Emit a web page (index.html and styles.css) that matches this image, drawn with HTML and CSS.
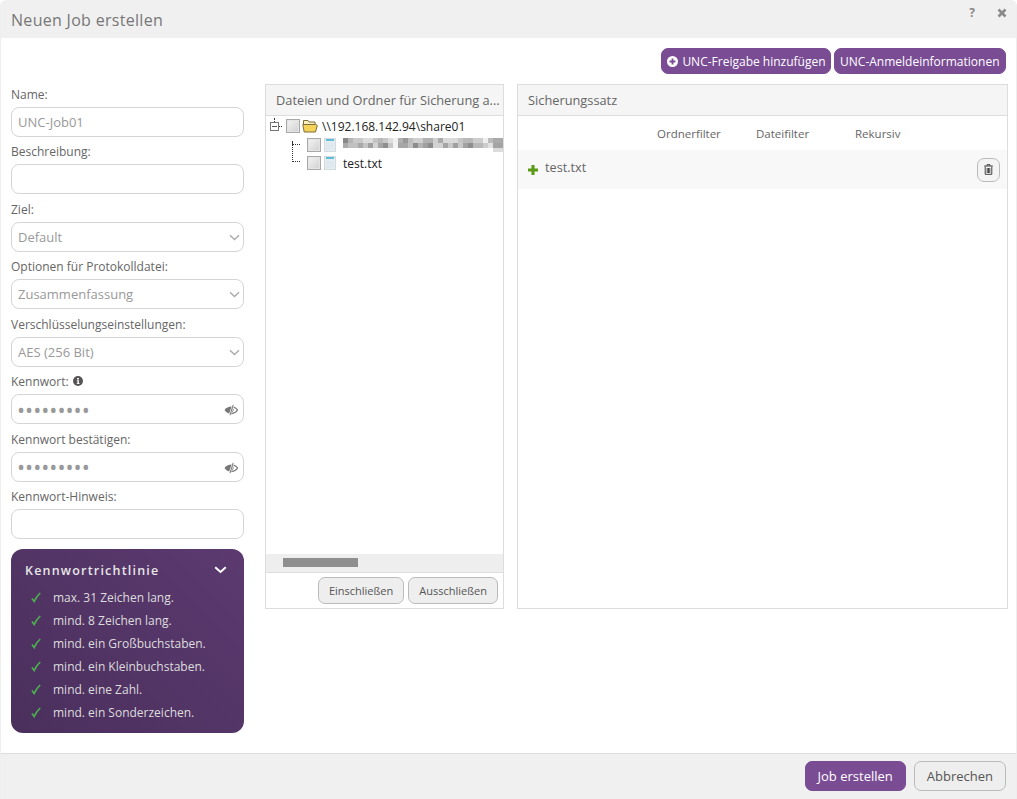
FILE: index.html
```html
<!DOCTYPE html>
<html lang="de">
<head>
<meta charset="UTF-8">
<meta name="viewport" content="width=device-width, initial-scale=1.0">
<title>Neuen Job erstellen</title>
<link rel="stylesheet" href="styles.css">
</head>
<body>
<div class="dialog">
    <div class="title-bar">
        <h1>Neuen Job erstellen</h1>
        <div class="title-icons">
            <span class="help-icon">?</span>
            <svg class="close-icon" width="10" height="10" viewBox="0 0 10 10"><path d="M1.5 1.5 8.5 8.5M8.5 1.5 1.5 8.5" stroke="#8a8a8a" stroke-width="2.6"/></svg>
        </div>
    </div>
    <div class="dialog-body">
        <div class="toolbar">
            <button class="btn btn-primary btn-small btn-add">
                <svg width="11" height="11" viewBox="0 0 12 12"><circle cx="6" cy="6" r="6" fill="#fff"/><path d="M6 2.8v6.4M2.8 6h6.4" stroke="#7a4c94" stroke-width="2"/></svg>
                UNC-Freigabe hinzufügen
            </button>
            <button class="btn btn-primary btn-small btn-cred">UNC-Anmeldeinformationen</button>
        </div>
        <div class="columns">
            <div class="form-col">
                <div class="field">
                    <label>Name:</label>
                    <input class="input" type="text" placeholder="UNC-Job01">
                </div>
                <div class="field">
                    <label>Beschreibung:</label>
                    <input class="input" type="text">
                </div>
                <div class="field">
                    <label>Ziel:</label>
                    <div class="select-wrap">
                        <select class="input"><option>Default</option></select>
                        <svg class="select-arrow" width="11" height="7" viewBox="0 0 11 7"><path d="M1 1.2 5.5 5.5 10 1.2" fill="none" stroke="#aaa" stroke-width="1.4"/></svg>
                    </div>
                </div>
                <div class="field">
                    <label>Optionen für Protokolldatei:</label>
                    <div class="select-wrap">
                        <select class="input"><option>Zusammenfassung</option></select>
                        <svg class="select-arrow" width="11" height="7" viewBox="0 0 11 7"><path d="M1 1.2 5.5 5.5 10 1.2" fill="none" stroke="#aaa" stroke-width="1.4"/></svg>
                    </div>
                </div>
                <div class="field">
                    <label>Verschlüsselungseinstellungen:</label>
                    <div class="select-wrap">
                        <select class="input"><option>AES (256 Bit)</option></select>
                        <svg class="select-arrow" width="11" height="7" viewBox="0 0 11 7"><path d="M1 1.2 5.5 5.5 10 1.2" fill="none" stroke="#aaa" stroke-width="1.4"/></svg>
                    </div>
                </div>
                <div class="field">
                    <label>Kennwort:
                        <svg class="info-icon" width="10" height="10" viewBox="0 0 10 10"><circle cx="5" cy="5" r="5" fill="#555"/><path d="M4.1 2h1.8v1.4H4.1zM3.8 4.2h2.1v3h.7v.9H3.7v-.9h.7V5.1h-.6z" fill="#fff"/></svg>
                    </label>
                    <div class="select-wrap">
                        <input class="input input-password" type="password" value="123456789">
                        <svg class="eye-icon" width="14" height="12" viewBox="0 0 14 12"><path d="M.5 6C2 3.800 4.500 2.500 7.600 2.500L5.200 9.400C3.300 9.100 1.700 7.900 .5 6z" fill="#777"/><path d="M9.600 3C11.200 3.600 12.600 4.600 13.600 6 12.600 7.600 10.400 9.300 7.400 9.600" fill="none" stroke="#777" stroke-width="1.100"/><path d="M8.900 4.500C9.600 6 9 7.500 7.800 8" fill="none" stroke="#777"/><path d="M9.200 .8 6 11.200" stroke="#777" stroke-width="1"/></svg>
                    </div>
                </div>
                <div class="field">
                    <label>Kennwort bestätigen:</label>
                    <div class="select-wrap">
                        <input class="input input-password" type="password" value="123456789">
                        <svg class="eye-icon" width="14" height="12" viewBox="0 0 14 12"><path d="M.5 6C2 3.800 4.500 2.500 7.600 2.500L5.200 9.400C3.300 9.100 1.700 7.900 .5 6z" fill="#777"/><path d="M9.600 3C11.200 3.600 12.600 4.600 13.600 6 12.600 7.600 10.400 9.300 7.400 9.600" fill="none" stroke="#777" stroke-width="1.100"/><path d="M8.900 4.500C9.600 6 9 7.500 7.800 8" fill="none" stroke="#777"/><path d="M9.200 .8 6 11.200" stroke="#777" stroke-width="1"/></svg>
                    </div>
                </div>
                <div class="field">
                    <label>Kennwort-Hinweis:</label>
                    <input class="input" type="text">
                </div>
                <div class="policy">
                    <div class="policy-header">
                        <span>Kennwortrichtlinie</span>
                        <svg width="13" height="8" viewBox="0 0 13 8"><path d="M1.200 1.300 6.500 6 11.800 1.300" fill="none" stroke="#fff" stroke-width="2"/></svg>
                    </div>
                    <ul class="policy-list">
                        <li><svg width="10" height="11" viewBox="0 0 10 11"><path d="M1 6.500 3.200 9.500C4.500 6.500 6.500 3.500 9.200 1" fill="none" stroke="#4caf50" stroke-width="1.700"/></svg>max. 31 Zeichen lang.</li>
                        <li><svg width="10" height="11" viewBox="0 0 10 11"><path d="M1 6.500 3.200 9.500C4.500 6.500 6.500 3.500 9.200 1" fill="none" stroke="#4caf50" stroke-width="1.700"/></svg>mind. 8 Zeichen lang.</li>
                        <li><svg width="10" height="11" viewBox="0 0 10 11"><path d="M1 6.500 3.200 9.500C4.500 6.500 6.500 3.500 9.200 1" fill="none" stroke="#4caf50" stroke-width="1.700"/></svg>mind. ein Großbuchstaben.</li>
                        <li><svg width="10" height="11" viewBox="0 0 10 11"><path d="M1 6.500 3.200 9.500C4.500 6.500 6.500 3.500 9.200 1" fill="none" stroke="#4caf50" stroke-width="1.700"/></svg>mind. ein Kleinbuchstaben.</li>
                        <li><svg width="10" height="11" viewBox="0 0 10 11"><path d="M1 6.500 3.200 9.500C4.500 6.500 6.500 3.500 9.200 1" fill="none" stroke="#4caf50" stroke-width="1.700"/></svg>mind. eine Zahl.</li>
                        <li><svg width="10" height="11" viewBox="0 0 10 11"><path d="M1 6.500 3.200 9.500C4.500 6.500 6.500 3.500 9.200 1" fill="none" stroke="#4caf50" stroke-width="1.700"/></svg>mind. ein Sonderzeichen.</li>
                    </ul>
                </div>
            </div>

            <div class="panel tree-panel">
                <div class="panel-header">Dateien und Ordner für Sicherung a...</div>
                <div class="tree">
                    <div class="tree-row">
                        <span class="expander"></span>
                        <span class="check"></span>
                        <svg class="folder-icon" width="16" height="14" viewBox="0 0 16 14"><path d="M1.500 6V1.500h4.500l1 1.500h6v3" fill="#fbf0c0" stroke="#7d6d35"/><path d="M.8 5.500h13l1.500 1-1.800 6.500H2.200z" fill="#f5d35a" stroke="#7d6d35"/></svg>
                        <span class="tree-label">\\192.168.142.94\share01</span>
                    </div>
                    <div class="tree-row tree-child">
                        <span class="connector connector-first"></span>
                        <span class="check"></span>
                        <svg class="file-icon" width="14" height="16" viewBox="0 0 14 16"><rect x="1.500" y="1.500" width="11" height="13" fill="#e6edf1" stroke="#d2dbe0"/><rect x="3" y="2" width="8" height="2" fill="#62bcd8"/><path d="M3 6h8v7H3z" fill="#dfe8ee"/></svg>
                        <svg class="blurred-name" width="161" height="16" viewBox="0 0 161 16" shape-rendering="crispEdges">
                            <rect x="0" y="1" width="5" height="5" fill="#888"/><rect x="5" y="1" width="5" height="5" fill="#b5b5b5"/><rect x="10" y="1" width="10" height="5" fill="#c9c9c9"/><rect x="20" y="1" width="10" height="5" fill="#dcdcdc"/><rect x="30" y="1" width="5" height="5" fill="#c4c4c4"/><rect x="35" y="1" width="5" height="5" fill="#b8b8b8"/><rect x="40" y="1" width="5" height="5" fill="#c8c8c8"/><rect x="45" y="1" width="5" height="5" fill="#ddd"/><rect x="50" y="1" width="5" height="5" fill="#f0f0f0"/><rect x="55" y="1" width="5" height="5" fill="#b0b0b0"/><rect x="60" y="1" width="5" height="5" fill="#999"/><rect x="65" y="1" width="5" height="5" fill="#bdbdbd"/><rect x="70" y="1" width="10" height="5" fill="#cfcfcf"/><rect x="80" y="1" width="10" height="5" fill="#b2b2b2"/><rect x="90" y="1" width="5" height="5" fill="#d0d0d0"/><rect x="95" y="1" width="5" height="5" fill="#aaa"/><rect x="100" y="1" width="15" height="5" fill="#d9d9d9"/><rect x="115" y="1" width="5" height="5" fill="#c6c6c6"/><rect x="120" y="1" width="10" height="5" fill="#b8b8b8"/><rect x="130" y="1" width="10" height="5" fill="#cdcdcd"/><rect x="140" y="1" width="5" height="5" fill="#eee"/><rect x="145" y="1" width="5" height="5" fill="#bbb"/><rect x="150" y="1" width="11" height="5" fill="#aaa"/>
                            <rect x="0" y="6" width="5" height="5" fill="#aaa"/><rect x="5" y="6" width="10" height="5" fill="#c0c0c0"/><rect x="15" y="6" width="5" height="5" fill="#a8a8a8"/><rect x="20" y="6" width="5" height="5" fill="#c4c4c4"/><rect x="25" y="6" width="5" height="5" fill="#a0a0a0"/><rect x="30" y="6" width="5" height="5" fill="#d4d4d4"/><rect x="35" y="6" width="5" height="5" fill="#a6a6a6"/><rect x="40" y="6" width="5" height="5" fill="#8f8f8f"/><rect x="45" y="6" width="5" height="5" fill="#c8c8c8"/><rect x="50" y="6" width="5" height="5" fill="#f2f2f2"/><rect x="55" y="6" width="10" height="5" fill="#a6a6a6"/><rect x="65" y="6" width="5" height="5" fill="#c0c0c0"/><rect x="70" y="6" width="5" height="5" fill="#8c8c8c"/><rect x="75" y="6" width="5" height="5" fill="#b4b4b4"/><rect x="80" y="6" width="5" height="5" fill="#a0a0a0"/><rect x="85" y="6" width="5" height="5" fill="#8c8c8c"/><rect x="90" y="6" width="10" height="5" fill="#d2d2d2"/><rect x="100" y="6" width="5" height="5" fill="#a4a4a4"/><rect x="105" y="6" width="5" height="5" fill="#c8c8c8"/><rect x="110" y="6" width="5" height="5" fill="#a0a0a0"/><rect x="115" y="6" width="5" height="5" fill="#c8c8c8"/><rect x="120" y="6" width="5" height="5" fill="#a2a2a2"/><rect x="125" y="6" width="5" height="5" fill="#8e8e8e"/><rect x="130" y="6" width="10" height="5" fill="#b8b8b8"/><rect x="140" y="6" width="5" height="5" fill="#ccc"/><rect x="145" y="6" width="5" height="5" fill="#e2e2e2"/><rect x="150" y="6" width="11" height="5" fill="#a4a4a4"/>
                            <rect x="150" y="11" width="11" height="4" fill="#dcdcdc"/>
                        </svg>
                    </div>
                    <div class="tree-row tree-child">
                        <span class="connector connector-last"></span>
                        <span class="check"></span>
                        <svg class="file-icon" width="14" height="16" viewBox="0 0 14 16"><rect x="1.500" y="1.500" width="11" height="13" fill="#e6edf1" stroke="#d2dbe0"/><rect x="3" y="2" width="8" height="2" fill="#62bcd8"/><path d="M3 6h8v7H3z" fill="#dfe8ee"/></svg>
                        <span class="tree-label">test.txt</span>
                    </div>
                </div>
                <div class="hscroll"><div class="hscroll-thumb"></div></div>
                <div class="panel-footer">
                    <button class="btn btn-light btn-tiny">Einschließen</button>
                    <button class="btn btn-light btn-tiny">Ausschließen</button>
                </div>
            </div>

            <div class="panel set-panel">
                <div class="panel-header">Sicherungssatz</div>
                <div class="set-head">
                    <span>Ordnerfilter</span>
                    <span>Dateifilter</span>
                    <span>Rekursiv</span>
                </div>
                <div class="set-row">
                    <svg class="plus-icon" width="10" height="10" viewBox="0 0 11 11"><path d="M3.800 0h3.400v3.800H11v3.400H7.200V11H3.800V7.200H0V3.800h3.800z" fill="#5c9a14"/></svg>
                    <span class="set-name">test.txt</span>
                    <button class="trash-btn">
                        <svg width="9" height="11" viewBox="0 0 9 11"><path d="M.2 2h8.600M3 2V.7h3V2M1.200 2.500v7.800h6.600V2.500M3.200 4v5M4.500 4v5M5.800 4v5" fill="none" stroke="#444" stroke-width="1"/></svg>
                    </button>
                </div>
            </div>
        </div>
    </div>
    <div class="dialog-footer">
        <button class="btn btn-primary btn-large">Job erstellen</button>
        <button class="btn btn-light btn-large">Abbrechen</button>
    </div>
</div>
</body>
</html>
```

FILE: styles.css
```css
* {
    margin: 0;
    padding: 0;
    box-sizing: border-box;
    font-family: 'Open Sans', 'Liberation Sans', sans-serif;
}
body {
    background: #fff;
    color: #666;
    font-size: 13px;
}
.dialog {
    display: flex;
    flex-direction: column;
    height: 799px;
    border-left: 1px solid #eee;
    border-right: 1px solid #eee;
    border-radius: 6px 6px 0 0;
    overflow: hidden;
}
.title-bar {
    display: flex;
    justify-content: space-between;
    height: 38px;
    padding: 0 9px 0 10px;
    background: #f0f0f0;
    flex-shrink: 0;
}
.title-bar h1 {
    font-size: 16px;
    font-weight: 400;
    line-height: 40px;
    color: #777;
    letter-spacing: 0.3px;
}
.title-icons {
    display: flex;
    gap: 22px;
    align-items: flex-start;
    padding-top: 7px;
}
.help-icon {
    font-size: 12px;
    font-weight: 700;
    line-height: 12px;
    color: #888;
}
.close-icon {
    margin-top: 1px;
}
.dialog-body {
    flex: 1;
    padding: 10px 8px 0 10px;
}
.toolbar {
    display: flex;
    justify-content: flex-end;
    gap: 3px;
    margin-right: 2px;
    margin-bottom: 10px;
}
.btn {
    border-radius: 7px;
    cursor: pointer;
    white-space: nowrap;
}
.btn-primary {
    background: #7a4c94;
    border: 1px solid #7a4c94;
    color: #fff;
}
.btn-light {
    background: #eee;
    border: 1px solid #bbb;
    color: #555;
}
.btn-small {
    display: flex;
    align-items: center;
    gap: 4px;
    height: 26px;
    font-size: 12px;
}
.btn-add {
    padding: 0 4px 0 5px;
}
.btn-cred {
    padding: 0 5.5px;
}
.btn-tiny {
    height: 27px;
    padding: 0 10px;
    font-size: 11px;
}
.btn-large {
    height: 30px;
    font-size: 13px;
    padding: 0 12px;
}
.columns {
    display: flex;
    align-items: flex-start;
}
.form-col {
    width: 233px;
    margin-top: -0.25px;
    margin-right: 21px;
}
.field {
    margin-bottom: 4.5px;
}
.field label {
    display: block;
    height: 19px;
    margin-bottom: 4px;
    font-size: 12px;
    line-height: 22.75px;
    color: #666;
}
.info-icon {
    margin-left: 1px;
}
.input {
    display: block;
    width: 100%;
    height: 30px;
    padding: 0 6px;
    border: 1px solid #d5d5d5;
    border-radius: 8px;
    background: #fff;
    font-size: 13px;
    color: #999;
    appearance: none;
    outline: none;
}
.input::placeholder {
    color: #999;
}
.input-password {
    font-size: 21.5px;
    padding-left: 5px;
}
.select-wrap {
    position: relative;
}
.select-arrow {
    position: absolute;
    right: 4px;
    top: 12px;
}
.eye-icon {
    position: absolute;
    right: 6px;
    top: 10px;
}
.policy {
    height: 184px;
    margin-top: 10px;
    padding: 12px 17px 0 14px;
    border-radius: 12px;
    background: linear-gradient(45deg, #4a2f5c, #5c3a70);
    color: #ddd;
}
.policy-header {
    display: flex;
    justify-content: space-between;
    align-items: center;
    height: 18px;
    margin-bottom: 7px;
    font-size: 12.5px;
    font-weight: 600;
    letter-spacing: 1.2px;
    color: #e6e6e6;
}
.policy-list {
    list-style: none;
    padding-left: 6px;
}
.policy-list li {
    display: flex;
    align-items: center;
    gap: 12px;
    height: 23px;
    font-size: 12px;
    color: #ddd;
}
.panel {
    display: flex;
    flex-direction: column;
    height: 525px;
    border: 1px solid #ddd;
    background: #fff;
}
.tree-panel {
    width: 239px;
    margin-right: 13px;
}
.set-panel {
    width: 491px;
}
.panel-header {
    height: 31px;
    padding: 0 10px;
    border-bottom: 1px solid #ddd;
    background: #f5f5f5;
    font-size: 12.8px;
    line-height: 30px;
    color: #666;
    white-space: nowrap;
    overflow: hidden;
}
.tree {
    flex: 1;
    padding: 1px 0 0 4px;
    overflow: hidden;
}
.tree-row {
    display: flex;
    align-items: center;
    height: 18.5px;
}
.tree-child {
    padding-left: 22px;
}
.tree-label {
    font-size: 12px;
    color: #222;
    white-space: nowrap;
}
.expander {
    position: relative;
    width: 9px;
    height: 9px;
    margin-right: 7px;
    border: 1px solid #777;
    background: linear-gradient(#555, #555) center / 5px 1px no-repeat;
}
.expander::before {
    content: "";
    position: absolute;
    left: 3px;
    top: -5px;
    height: 4px;
    border-left: 1px dotted #333;
}
.expander::after {
    content: "";
    position: absolute;
    left: 8px;
    top: 3px;
    width: 3px;
    border-top: 1px dotted #333;
}
.check {
    width: 14px;
    height: 14px;
    border: 1px solid #a8a8a8;
    box-shadow: inset 0 0 0 1px #e4e4e4;
    background: linear-gradient(135deg, #f4f4f4, #d0d0d0);
    flex-shrink: 0;
}
.folder-icon {
    margin: 0 4px 0 2px;
}
.file-icon {
    margin: 0 6px 0 2px;
}
.connector {
    align-self: flex-start;
    width: 8px;
    margin-right: 7px;
    border-left: 1px dotted #333;
    border-bottom: 1px dotted #333;
}
.connector-first {
    height: 4px;
    margin-top: 5px;
}
.connector-last {
    height: 19px;
    margin-top: -11px;
}
.blurred-name {
    flex-shrink: 0;
    margin-right: -20px;
}
.hscroll {
    height: 18px;
    padding: 4px 0 0 17px;
    background: #eee;
    flex-shrink: 0;
}
.hscroll-thumb {
    width: 75px;
    height: 9px;
    background: #8f8f8f;
}
.panel-footer {
    display: flex;
    justify-content: flex-end;
    gap: 4px;
    height: 36px;
    padding: 4px 5px 0 0;
    border-top: 1px solid #ddd;
    flex-shrink: 0;
}
.set-head {
    display: flex;
    height: 34px;
    padding-left: 139px;
    font-size: 11.5px;
    line-height: 35px;
    color: #666;
}
.set-head span {
    width: 99px;
}
.set-row {
    display: flex;
    align-items: center;
    height: 39px;
    padding: 0 7px 0 10px;
    background: #f8f8f8;
}
.set-name {
    flex: 1;
    margin: -6px 0 0 7px;
    font-size: 12.7px;
    color: #666;
}
.trash-btn {
    display: flex;
    align-items: center;
    justify-content: center;
    width: 23px;
    height: 24px;
    border: 1px solid #bbb;
    border-radius: 7px;
    background: #f4f4f4;
    cursor: pointer;
}
.dialog-footer {
    display: flex;
    justify-content: flex-end;
    gap: 8px;
    height: 46px;
    padding: 7px 10px 0 0;
    border-top: 1px solid #ddd;
    background: #f0f0f0;
    flex-shrink: 0;
}
```
